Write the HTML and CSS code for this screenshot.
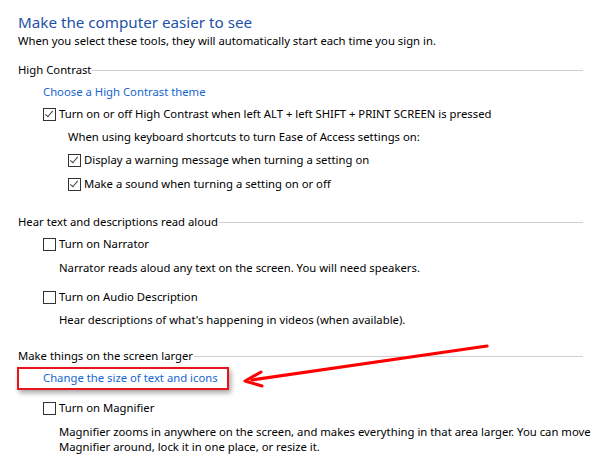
FILE: index.html
```html
<!DOCTYPE html>
<html>
<head>
<meta charset="utf-8">
<link rel="stylesheet" href="styles.css">
</head>
<body>
<div class="page">
  <h1 class="title">Make the computer easier to see</h1>
  <p class="sub">When you select these tools, they will automatically start each time you sign in.</p>

  <section class="group g1">
    <div class="ghead"><span>High Contrast</span><i class="rule"></i></div>
    <a class="link r-link">Choose a High Contrast theme</a>
    <label class="cb r-cb1"><span class="box on"></span>Turn on or off High Contrast when left ALT + left SHIFT + PRINT SCREEN is pressed</label>
    <div class="inner">
      <p class="txt r-when">When using keyboard shortcuts to turn Ease of Access settings on:</p>
      <label class="cb r-cb2"><span class="box on"></span>Display a warning message when turning a setting on</label>
      <label class="cb r-cb3"><span class="box on"></span>Make a sound when turning a setting on or off</label>
    </div>
  </section>

  <section class="group g2">
    <div class="ghead"><span>Hear text and descriptions read aloud</span><i class="rule"></i></div>
    <label class="cb r-narr"><span class="box"></span>Turn on Narrator</label>
    <p class="txt desc r-narrd">Narrator reads aloud any text on the screen. You will need speakers.</p>
    <label class="cb r-audio"><span class="box"></span>Turn on Audio Description</label>
    <p class="txt desc r-audiod">Hear descriptions of what's happening in videos (when available).</p>
  </section>

  <section class="group g3">
    <div class="ghead"><span>Make things on the screen larger</span><i class="rule"></i></div>
    <a class="link r-change">Change the size of text and icons</a>
    <label class="cb r-magn"><span class="box"></span>Turn on Magnifier</label>
    <p class="txt desc r-magnd">Magnifier zooms in anywhere on the screen, and makes everything in that area larger. You can move Magnifier around, lock it in one place, or resize it.</p>
  </section>

  <div class="hilite"></div>
  <svg class="arrow" width="599" height="474" viewBox="0 0 599 474">
    <path d="M487 346 L252 380" stroke="#f00" stroke-width="3.2" fill="none" stroke-linecap="round"/>
    <path d="M261 372 L245 381 L262 386" stroke="#f00" stroke-width="3" fill="none" stroke-linecap="round" stroke-linejoin="round"/>
  </svg>
</div>
</body>
</html>
```

FILE: styles.css
```css
html, body {
  margin: 0;
  padding: 0;
  background: #fff;
}
.page {
  position: relative;
  width: 599px;
  height: 474px;
  overflow: hidden;
  padding: 12px 16px 0 18px;
  box-sizing: border-box;
  font-family: "Noto Sans", "Open Sans", sans-serif;
  font-size: 11.3px;
  color: #000;
}
.title {
  margin: 0;
  font-weight: normal;
  font-size: 15.2px;
  line-height: 20px;
  color: #1e52a8;
}
p { margin: 0; }
.sub, .txt, .cb, .link, .ghead {
  line-height: 16px;
  height: 16px;
  white-space: nowrap;
}
.sub { margin-top: 1px; }
.group { display: flex; flex-direction: column; }
.g1 { margin-top: 13px; }
.g2 { margin-top: 22px; }
.g3 { margin-top: 20px; }
.ghead {
  display: flex;
  align-items: center;
  gap: 1px;
}
.rule {
  flex: 1;
  height: 1px;
  background: #cfcfcf;
  margin-top: 1px;
}
.link {
  display: block;
  color: #1566d0;
  padding-left: 25px;
  cursor: pointer;
}
.cb {
  display: flex;
  align-items: center;
  padding-left: 25px;
  gap: 3px;
}
.box {
  width: 11px;
  height: 11px;
  border: 1px solid #333;
  background: #fff;
  position: relative;
  flex: none;
}
.box.on::after {
  content: "";
  position: absolute;
  left: 3px;
  top: 0px;
  width: 3px;
  height: 7px;
  border-right: 1.5px solid #444;
  border-bottom: 1.5px solid #444;
  transform: rotate(40deg);
}
.inner { display: flex; flex-direction: column; padding-left: 50px; }
.inner .cb { padding-left: 0; }
.desc { padding-left: 41px; }
.r-link { margin-top: 6px; }
.r-cb1 { margin-top: 6px; }
.r-when { margin-top: 7px; }
.r-cb2 { margin-top: 7px; }
.r-cb3 { margin-top: 8px; }
.r-narr { margin-top: 6px; }
.r-narrd { margin-top: 8px; }
.r-audio { margin-top: 13px; }
.r-audiod { margin-top: 7px; }
.r-change { margin-top: 6px; }
.r-magn { margin-top: 14px; }
.r-magnd { margin-top: 8px; white-space: normal; height: auto; line-height: 15px; width: 535px; }
.hilite {
  position: absolute;
  left: 17px;
  top: 367px;
  width: 208px;
  height: 19px;
  border: 2px solid #e8141b;
  box-shadow: 2px 3px 5px rgba(0,0,0,0.35);
}
.arrow {
  position: absolute;
  left: 0;
  top: 0;
  pointer-events: none;
}
```
